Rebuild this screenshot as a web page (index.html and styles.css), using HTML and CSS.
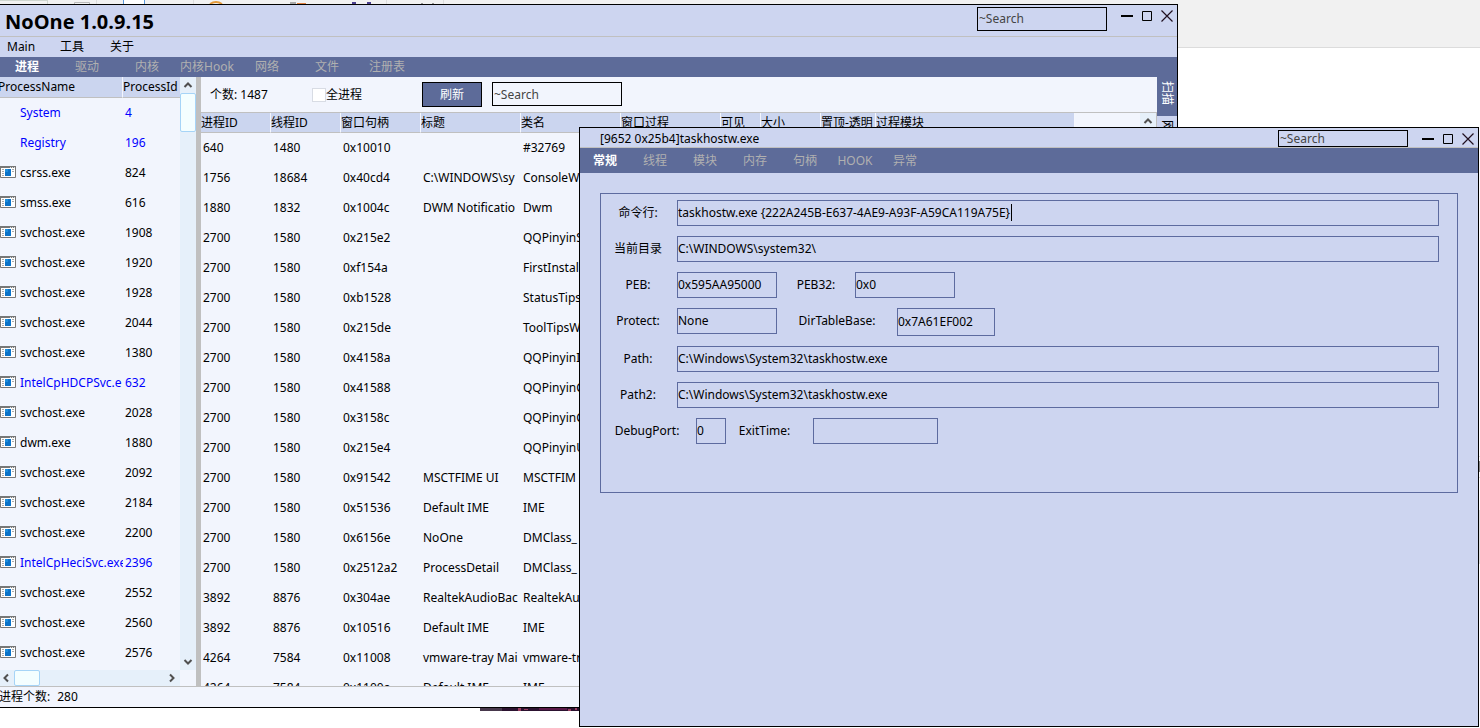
FILE: index.html
```html
<!DOCTYPE html>
<html lang="zh-CN">
<head>
<meta charset="utf-8">
<title>NoOne 1.0.9.15</title>
<link rel="stylesheet" href="styles.css">
</head>
<body>
<svg class="defs" aria-hidden="true">
  <symbol id="app" viewBox="0 0 16 12"><path fill="#fff" stroke="#777" d="M.5.5h15v11H.5z"/><path fill="#777" d="M0 0h16v2H0z"/><path stroke="#ddd" d="M10 1.5h1M12 1.5h1M14 1.5h1"/><path stroke="#aaa" d="M2 3.500h2M2 5.500h2M2 7.500h2M2 9.500h2M12 3.500h2M12 5.500h2"/><path fill="#0b73c9" d="M5 3h6v7H5z"/><path fill="#1d8ddc" d="M5 3h3v3H5z"/></symbol>
  <symbol id="min" viewBox="0 0 20 24"><path stroke="#000" stroke-width="2" d="M4 11h12"/></symbol>
  <symbol id="max" viewBox="0 0 20 24"><path fill="none" stroke="#000" d="M5.500 6.500h9v9h-9z"/></symbol>
  <symbol id="close" viewBox="0 0 20 24"><path fill="none" stroke="#201020" stroke-width="1.2" d="M4.500 5.500l11 11M15.500 5.500l-11 11"/></symbol>
  <symbol id="chev" viewBox="0 0 10 10"><path fill="none" stroke="#505050" stroke-width="2" d="M1.500 7l3.500-3.500L8.500 7"/></symbol>
</svg>
<div class="desk">
  <svg class="desk-top" width="480" height="4" aria-hidden="true"><path fill="#fff" d="M0 0h47v1H0zM124 0h20v4h-20z"/><path stroke="#cfd6cf" d="M0 .5h47M47.500 0v4"/><path fill="none" stroke="#bbb" d="M74.500 4V2.500h15V4"/><path stroke="#ddd" d="M96.500 0v4M193.500 0v4M386.500 0v4M443.500 0v4"/><path stroke="#5a98dc" d="M123.500 0v4M144.500 0v4"/><path fill="none" stroke="#e49a3a" stroke-width="2" d="M210 4q6-4 12 0"/><path fill="#aaa" d="M290 2h6v2h-6z"/><path fill="#e08040" d="M297 3h9v1h-9z"/><path stroke="#4b3f8f" stroke-width="2" d="M352 3h4M367 3h4"/><path stroke="#999" d="M421 3.500h2M432 3.500h2"/></svg>
  <svg class="desk-bottom" width="100" height="3" aria-hidden="true"><path fill="#48384c" d="M0 0h100v3H0z"/><path fill="#2c1230" d="M22 0h78v3H22z"/><path fill="#9a3d60" d="M38 0h3v3h-3zM44 1h4v1h-4zM88 1h3v2h-3zM95 0h2v2h-2z"/><path fill="#5a1848" d="M59 0h28v2H59z"/></svg>
  <svg class="desk-side" width="1" height="110" aria-hidden="true"><path fill="#ddd" d="M0 0h1v1H0zM0 21h1v1H0zM0 54h1v54H0z"/><path fill="#888" d="M0 5h1v11H0z"/></svg>
</div>

<main class="win win-main">
  <header class="title">
    <h1>NoOne 1.0.9.15</h1>
    <input class="search" aria-label="Search" placeholder="~Search">
    <div class="ctl"><button aria-label="Minimize"><svg><use href="#min"/></svg></button><button aria-label="Maximize"><svg><use href="#max"/></svg></button><button aria-label="Close"><svg><use href="#close"/></svg></button></div>
  </header>
  <nav class="menu"><button>Main</button><button>工具</button><button>关于</button></nav>
  <nav class="tabs"><button class="on">进程</button><button>驱动</button><button>内核</button><button>内核Hook</button><button>网络</button><button>文件</button><button>注册表</button></nav>
  <div class="body">
    <section class="procs">
      <div class="clip">
        <table class="ptable">
          <colgroup><col class="w-name"><col></colgroup>
          <thead><tr><th><span class="pn">ProcessName</span></th><th>ProcessId</th></tr></thead>
          <tbody>
            <tr class="sys"><td>System</td><td>4</td></tr>
            <tr class="sys"><td>Registry</td><td>196</td></tr>
            <tr><td><svg class="ico"><use href="#app"/></svg>csrss.exe</td><td>824</td></tr>
            <tr><td><svg class="ico"><use href="#app"/></svg>smss.exe</td><td>616</td></tr>
            <tr><td><svg class="ico"><use href="#app"/></svg>svchost.exe</td><td>1908</td></tr>
            <tr><td><svg class="ico"><use href="#app"/></svg>svchost.exe</td><td>1920</td></tr>
            <tr><td><svg class="ico"><use href="#app"/></svg>svchost.exe</td><td>1928</td></tr>
            <tr><td><svg class="ico"><use href="#app"/></svg>svchost.exe</td><td>2044</td></tr>
            <tr><td><svg class="ico"><use href="#app"/></svg>svchost.exe</td><td>1380</td></tr>
            <tr class="sys"><td><svg class="ico"><use href="#app"/></svg>IntelCpHDCPSvc.e</td><td>632</td></tr>
            <tr><td><svg class="ico"><use href="#app"/></svg>svchost.exe</td><td>2028</td></tr>
            <tr><td><svg class="ico"><use href="#app"/></svg>dwm.exe</td><td>1880</td></tr>
            <tr><td><svg class="ico"><use href="#app"/></svg>svchost.exe</td><td>2092</td></tr>
            <tr><td><svg class="ico"><use href="#app"/></svg>svchost.exe</td><td>2184</td></tr>
            <tr><td><svg class="ico"><use href="#app"/></svg>svchost.exe</td><td>2200</td></tr>
            <tr class="sys"><td><svg class="ico"><use href="#app"/></svg>IntelCpHeciSvc.exe</td><td>2396</td></tr>
            <tr><td><svg class="ico"><use href="#app"/></svg>svchost.exe</td><td>2552</td></tr>
            <tr><td><svg class="ico"><use href="#app"/></svg>svchost.exe</td><td>2560</td></tr>
            <tr><td><svg class="ico"><use href="#app"/></svg>svchost.exe</td><td>2576</td></tr>
          </tbody>
        </table>
      </div>
      <div class="vbar"><button aria-label="Scroll up"><svg class="chev"><use href="#chev"/></svg></button><div class="vthumb"></div><button class="end" aria-label="Scroll down"><svg class="chev down"><use href="#chev"/></svg></button></div>
      <div class="hbar"><button class="start" aria-label="Scroll left"><svg class="chev left"><use href="#chev"/></svg></button><div class="hthumb"></div><button class="end" aria-label="Scroll right"><svg class="chev right"><use href="#chev"/></svg></button></div>
    </section>
    <section class="wins">
      <div class="tools">
        <span class="count">个数: 1487</span>
        <label class="all"><input type="checkbox">全进程</label>
        <button class="refresh">刷新</button>
        <input class="search" aria-label="Search windows" placeholder="~Search">
      </div>
      <div class="listing">
        <div class="clip">
          <table class="wtable">
            <colgroup><col class="w70"><col class="w70"><col class="w80"><col class="w100"><col class="w100"><col class="w100"><col class="w40"><col class="w60"><col class="w55"><col class="w199"></colgroup>
            <thead><tr><th>进程ID</th><th>线程ID</th><th>窗口句柄</th><th>标题</th><th>类名</th><th>窗口过程</th><th>可见</th><th>大小</th><th>置顶-透明</th><th>过程模块</th></tr></thead>
            <tbody>
              <tr><td>640</td><td>1480</td><td>0x10010</td><td></td><td>#32769</td></tr>
              <tr><td>1756</td><td>18684</td><td>0x40cd4</td><td>C:\WINDOWS\sy</td><td>ConsoleW</td></tr>
              <tr><td>1880</td><td>1832</td><td>0x1004c</td><td>DWM Notificatio</td><td>Dwm</td></tr>
              <tr><td>2700</td><td>1580</td><td>0x215e2</td><td></td><td>QQPinyinS</td></tr>
              <tr><td>2700</td><td>1580</td><td>0xf154a</td><td></td><td>FirstInstal</td></tr>
              <tr><td>2700</td><td>1580</td><td>0xb1528</td><td></td><td>StatusTips</td></tr>
              <tr><td>2700</td><td>1580</td><td>0x215de</td><td></td><td>ToolTipsW</td></tr>
              <tr><td>2700</td><td>1580</td><td>0x4158a</td><td></td><td>QQPinyinI</td></tr>
              <tr><td>2700</td><td>1580</td><td>0x41588</td><td></td><td>QQPinyinC</td></tr>
              <tr><td>2700</td><td>1580</td><td>0x3158c</td><td></td><td>QQPinyinC</td></tr>
              <tr><td>2700</td><td>1580</td><td>0x215e4</td><td></td><td>QQPinyinU</td></tr>
              <tr><td>2700</td><td>1580</td><td>0x91542</td><td>MSCTFIME UI</td><td>MSCTFIM</td></tr>
              <tr><td>2700</td><td>1580</td><td>0x51536</td><td>Default IME</td><td>IME</td></tr>
              <tr><td>2700</td><td>1580</td><td>0x6156e</td><td>NoOne</td><td>DMClass_</td></tr>
              <tr><td>2700</td><td>1580</td><td>0x2512a2</td><td>ProcessDetail</td><td>DMClass_</td></tr>
              <tr><td>3892</td><td>8876</td><td>0x304ae</td><td>RealtekAudioBac</td><td>RealtekAu</td></tr>
              <tr><td>3892</td><td>8876</td><td>0x10516</td><td>Default IME</td><td>IME</td></tr>
              <tr><td>4264</td><td>7584</td><td>0x11008</td><td>vmware-tray Mai</td><td>vmware-tr</td></tr>
              <tr><td>4264</td><td>7584</td><td>0x1100a</td><td>Default IME</td><td>IME</td></tr>
            </tbody>
          </table>
        </div>
        <div class="vbar"><button aria-label="Scroll list up"><svg class="chev"><use href="#chev"/></svg></button></div>
      </div>
    </section>
    <nav class="side"><button class="on">扫描</button><button>网络</button></nav>
  </div>
  <footer class="status"><span>进程个数:</span><span>280</span></footer>
</main>

<section class="win dialog">
  <header class="title">
    <h2>[9652 0x25b4]taskhostw.exe</h2>
    <input class="search" aria-label="Search details" placeholder="~Search">
    <div class="ctl"><button aria-label="Minimize"><svg><use href="#min"/></svg></button><button aria-label="Maximize"><svg><use href="#max"/></svg></button><button aria-label="Close"><svg><use href="#close"/></svg></button></div>
  </header>
  <nav class="tabs"><button class="on">常规</button><button>线程</button><button>模块</button><button>内存</button><button>句柄</button><button>HOOK</button><button>异常</button></nav>
  <form class="group">
    <div class="row"><label class="lead" for="cmd">命令行:</label><div class="edit"><input id="cmd" value="taskhostw.exe {222A245B-E637-4AE9-A93F-A59CA119A75E}"><i class="caret"></i></div></div>
    <div class="row"><label class="lead" for="cwd">当前目录</label><input id="cwd" class="grow" value="C:\WINDOWS\system32\"></div>
    <div class="row"><label class="lead" for="peb">PEB:</label><input id="peb" class="w100" value="0x595AA95000"><label class="l78" for="peb32">PEB32:</label><input id="peb32" class="w100" value="0x0"></div>
    <div class="row"><label class="lead" for="prot">Protect:</label><input id="prot" class="w100" value="None"><label class="l120" for="dir">DirTableBase:</label><input id="dir" class="tall" value="0x7A61EF002"></div>
    <div class="row"><label class="lead" for="path">Path:</label><input id="path" class="grow" value="C:\Windows\System32\taskhostw.exe"></div>
    <div class="row"><label class="lead" for="path2">Path2:</label><input id="path2" class="grow" value="C:\Windows\System32\taskhostw.exe"></div>
    <div class="row"><label class="l95" for="dbg">DebugPort:</label><input id="dbg" class="w30" value="0"><label class="l87" for="exit">ExitTime:</label><input id="exit" class="w125"></div>
  </form>
</section>
</body>
</html>
```
FILE: styles.css
```css
* { box-sizing: border-box; }
html, body { height: 100%; }
body {
  margin: 0;
  position: relative;
  overflow: hidden;
  background: #fff;
  color: #000;
  font: 12px/18px "Noto Sans", "Noto Sans CJK SC", sans-serif;
}
button, input { font: inherit; color: inherit; border: 0; padding: 0; margin: 0; background: none; border-radius: 0; }
h1, h2 { margin: 0; font-size: 12px; font-weight: 400; }
.defs { position: absolute; width: 0; height: 0; }

.desk { height: 48px; background: #f1f1f1; border-bottom: 1px solid #dcdcdc; }
.desk-top { position: absolute; left: 0; top: 0; }
.desk-bottom { position: absolute; left: 480px; bottom: 17px; }
.desk-side { position: absolute; right: 0; top: 456px; }

.win { position: absolute; display: flex; flex-direction: column; background: #cdd5f0; border: 1px solid #000; }
.win-main { left: 0; top: 4px; right: 302px; bottom: 20px; border-left: 0; overflow: hidden; }
.dialog { left: 579px; top: 127px; right: 1px; bottom: 1px; }

.title { display: flex; align-items: flex-start; flex: none; border-bottom: 1px solid #c0c0c0; height: 32px; }
.title h1 { flex: 1; padding-left: 5px; font-family: "Open Sans", sans-serif; font-size: 20px; font-weight: 700; line-height: 34px; }
.title h2 { flex: 1; padding-left: 20px; line-height: 22px; }
.search { width: 130px; height: 24px; border: 1px solid #000; padding: 0 1px; }
.search::placeholder { color: #444; opacity: 1; }
.title .search { margin: 2px 10px 0 0; padding-bottom: 1px; }
.ctl { display: flex; }
.ctl button { width: 20px; height: 24px; }
.ctl svg { display: block; width: 20px; height: 24px; }
.dialog .title { height: 20px; }
.dialog .title .search { height: 17px; line-height: 14px; padding-bottom: 0; }

.menu { display: flex; flex: none; height: 20px; padding-left: 7px; }
.menu button { width: 50px; text-align: left; }
.menu button:first-child { width: 53px; }

.tabs { display: flex; flex: none; height: 20px; margin-left: -3px; background: #5d6b99; color: #b0b0b0; }
.tabs button { width: 60px; text-align: center; white-space: nowrap; }
.tabs .on { color: #fff; font-weight: 700; }
.dialog .tabs { height: 25px; margin-left: 0; }
.dialog .tabs button { width: 50px; }

.body { flex: 1; min-height: 0; display: flex; background: #f2f5fd; }
.clip { overflow: hidden; min-width: 0; min-height: 0; flex: 1; }
table { border-collapse: separate; border-spacing: 0; table-layout: fixed; }
th, td { padding: 0; text-align: left; font-weight: 400; white-space: nowrap; overflow: hidden; }
th { background: #cbd5ef; border-right: 1px solid #f4f6fd; border-bottom: 1px solid #c0c0c0; }
td { height: 30px; padding-left: 2px; }

.procs { flex: none; width: 201px; border-right: 5px solid #c0c0c0; display: grid; grid-template: minmax(0, 1fr) 16px / 180px 16px; }
.ptable { width: 180px; }
.ptable th { height: 21px; line-height: 18px; }
.ptable th:last-child { border-right: 0; }
.pn { margin-left: -2px; }
.w-name { width: 123px; }
.ptable td:first-child { padding-left: 20px; position: relative; }
.ptable .ico { position: absolute; left: 0; top: 8px; width: 16px; height: 12px; }
.sys { color: #00f; }

.vbar { width: 16px; background: #e6f0fa; display: flex; flex-direction: column; }
.vbar button, .hbar button { flex: none; width: 16px; height: 16px; display: grid; place-items: center; }
.vbar .end { margin-top: auto; }
.hbar { display: flex; background: #e6f0fa; height: 16px; }
.hbar .start { width: 12px; }
.hbar .end { margin-left: auto; }
.vthumb { height: 39px; background: #f4feff; border: 1px solid #a6d4f7; border-radius: 2px; }
.hthumb { width: 26px; margin-left: 2px; background: #f4feff; border: 1px solid #a6d4f7; border-radius: 2px; }
.chev { width: 10px; height: 10px; display: block; }
.down { transform: rotate(180deg); }
.left { transform: rotate(-90deg); }
.right { transform: rotate(90deg); }

.wins { flex: 1; min-width: 0; display: flex; flex-direction: column; }
.tools { display: flex; align-items: flex-start; flex: none; height: 36px; padding: 5px 0 0 9px; border-bottom: 1px solid #c0c0c0; line-height: 25px; }
.count { width: 102px; }
.all { display: flex; align-items: center; width: 110px; }
.all input { appearance: none; width: 14px; height: 14px; background: #fff; border: 1px solid #d8dce4; }
.refresh { width: 60px; height: 25px; margin-right: 10px; background: #5d6b99; color: #fff; border: 1px solid #000; line-height: 20px; }
.listing { flex: 1; min-height: 0; display: flex; border-right: 1px solid #c0c0c0; }
.wtable { width: 874px; }
.wtable th { height: 20px; line-height: 17px; }
.w40 { width: 40px; }
.w55 { width: 55px; }
.w60 { width: 60px; }
.w70 { width: 70px; }
.w80 { width: 80px; }
.w100 { width: 100px; }
.w199 { width: 199px; }

.side { flex: none; width: 20px; display: flex; flex-direction: column; background: #cdd5f0; }
.side button { writing-mode: vertical-rl; text-orientation: sideways; width: 20px; height: 39px; padding-bottom: 6px; text-align: center; }
.side .on { background: #5d6b99; color: #fff; }

.status { flex: none; display: flex; gap: 7px; height: 21px; line-height: 20px; border-top: 1px solid #c0c0c0; background: #f2f5fd; margin-left: -1px; }

.group { margin: 20px 20px 0; height: 300px; padding: 6px 18px 0 0; border: 1px solid #5d6b9f; display: flex; flex-direction: column; gap: 10px; }
.row { display: flex; }
.row label { flex: none; text-align: center; line-height: 26px; }
.row input { height: 26px; border: 1px solid #5d6b9f; padding-bottom: 1px; }
.row .tall { width: 98px; height: 28px; }
.row .lead { width: 74px; margin-right: 2px; }
.l78 { width: 78px; }
.l120 { width: 120px; }
.row .l95 { width: 92px; margin-right: 3px; }
.row .l87 { width: 77px; margin-right: 10px; }
.w30 { width: 30px; }
.w125 { width: 125px; }
.grow { flex: 1; min-width: 0; }
.edit { position: relative; flex: 1; min-width: 0; display: flex; }
.edit input { flex: 1; min-width: 0; }
.caret { position: absolute; left: 334px; top: 4px; width: 1px; height: 17px; background: #000; }
```
